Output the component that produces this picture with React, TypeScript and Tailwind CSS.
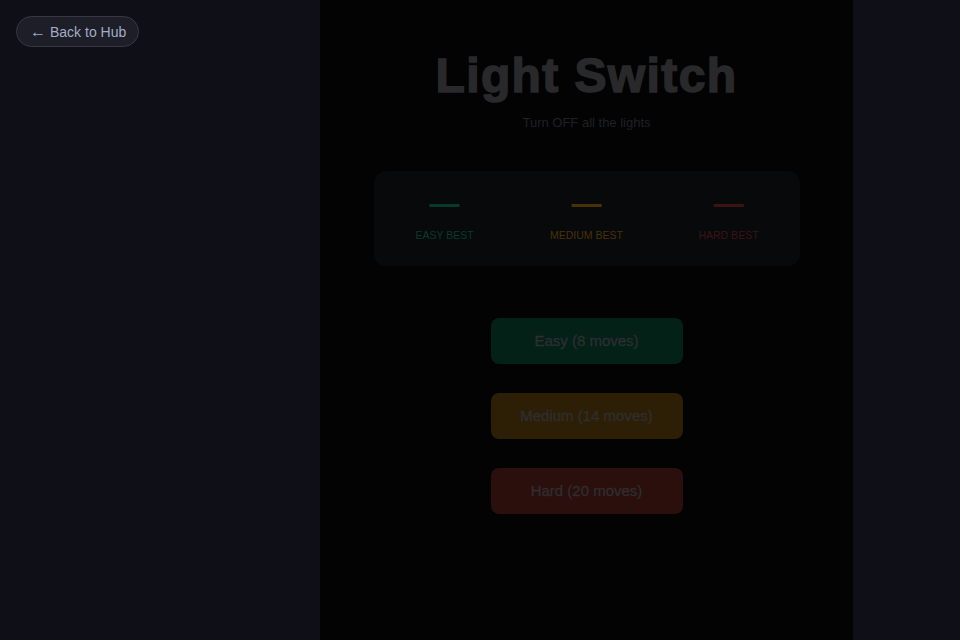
import React from "react";

const bests = [
  { label: "Easy Best", color: "text-[#083a2a]" },
  { label: "Medium Best", color: "text-[#483205]" },
  { label: "Hard Best", color: "text-[#3c1312]" },
];

const levels = [
  { label: "Easy (8 moves)", bg: "bg-[#042117]" },
  { label: "Medium (14 moves)", bg: "bg-[#2d1f05]" },
  { label: "Hard (20 moves)", bg: "bg-[#2b0f0c]" },
];

export default function App() {
  return (
    <div className="relative flex h-[640px] w-[960px] bg-[#0f0f18] pl-[320px] font-['Liberation_Sans',Arial,sans-serif]">
      <button className="absolute left-4 top-4 flex h-[31px] items-center gap-[4px] rounded-full border border-[#363845] bg-[#1d1e27] pl-[13px] pr-[12px] text-sm text-[#a3adc6]">
        <span className="text-base leading-none">←</span>
        <span>Back to Hub</span>
      </button>

      <main className="flex h-full w-[533px] flex-col items-center bg-[#030304] pt-[50px]">
        <h1 className="text-[48px] font-black leading-[52px] tracking-[1.4px] text-[#29292b] [-webkit-text-stroke:1.5px_#29292b]">
          Light Switch
        </h1>
        <p className="mt-[11px] text-[13px] leading-5 text-[#202023]">Turn OFF all the lights</p>

        <div className="mt-[38px] grid h-[95px] w-[426px] grid-cols-3 rounded-xl bg-[#08090b] pt-[15px]">
          {bests.map((b) => (
            <div key={b.label} className={`flex flex-col items-center ${b.color}`}>
              <span className="text-[30px] font-bold leading-[36px]">—</span>
              <span className="mt-[6px] text-[10.5px] uppercase leading-[14px]">{b.label}</span>
            </div>
          ))}
        </div>

        <div className="mt-[52px] flex flex-col gap-[29px]">
          {levels.map((l) => (
            <button
              key={l.label}
              className={`h-[46px] w-[192px] rounded-lg text-[15px] font-medium text-[#2e2e31] [-webkit-text-stroke:0.3px_#2e2e31] ${l.bg}`}
            >
              {l.label}
            </button>
          ))}
        </div>
      </main>
    </div>
  );
}
